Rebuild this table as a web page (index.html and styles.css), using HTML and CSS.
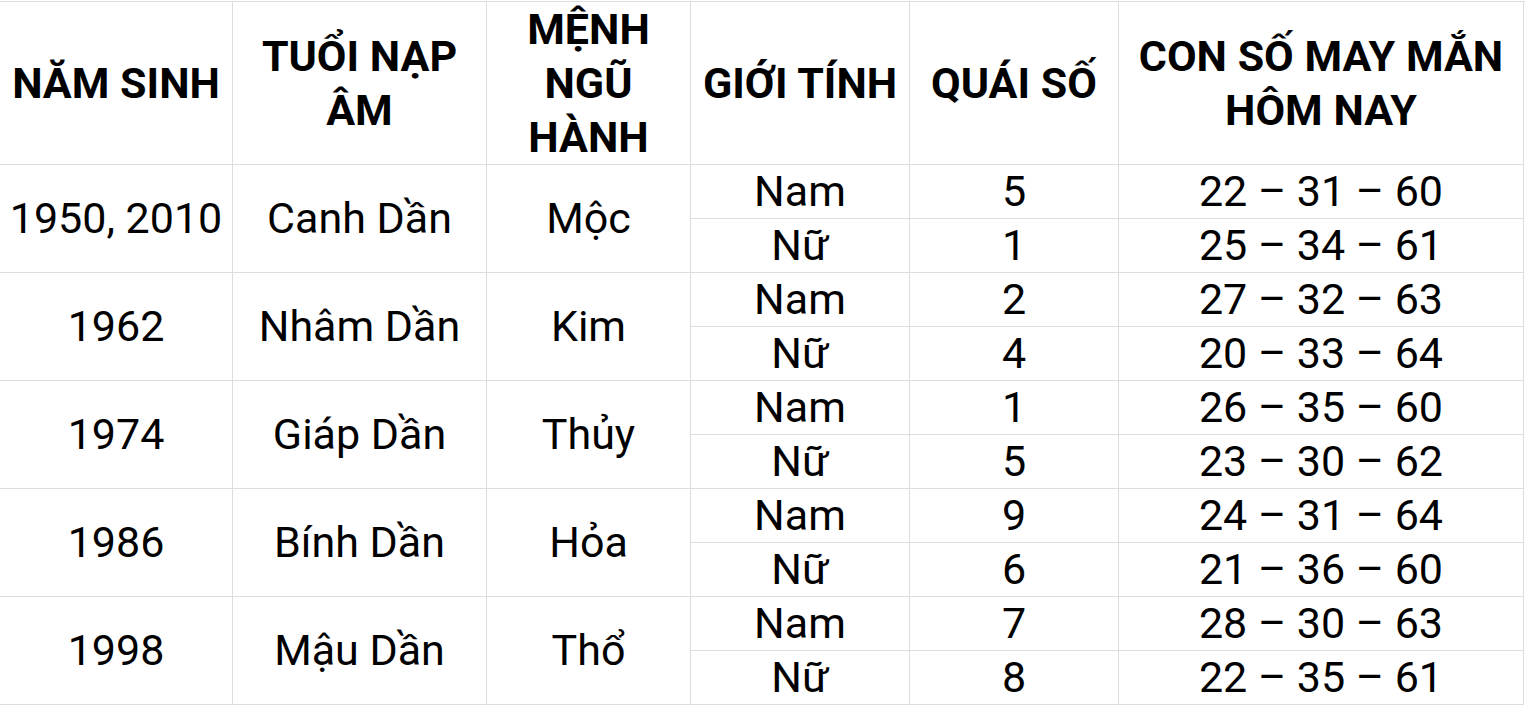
FILE: index.html
```html
<!DOCTYPE html>
<html lang="vi">
<head>
<meta charset="utf-8">
<title>Con số may mắn</title>
<link rel="stylesheet" href="styles.css">
</head>
<body>
<div class="table">
  <div class="th c1">NĂM SINH</div>
  <div class="th">TUỔI NẠP<br>ÂM</div>
  <div class="th">MỆNH<br>NGŨ<br>HÀNH</div>
  <div class="th">GIỚI TÍNH</div>
  <div class="th">QUÁI SỐ</div>
  <div class="th">CON SỐ MAY MẮN<br>HÔM NAY</div>

  <div class="td span c1">1950, 2010</div>
  <div class="td span">Canh Dần</div>
  <div class="td span">Mộc</div>
  <div class="td">Nam</div><div class="td">5</div><div class="td">22 – 31 – 60</div>
  <div class="td">Nữ</div><div class="td">1</div><div class="td">25 – 34 – 61</div>

  <div class="td span c1">1962</div>
  <div class="td span">Nhâm Dần</div>
  <div class="td span">Kim</div>
  <div class="td">Nam</div><div class="td">2</div><div class="td">27 – 32 – 63</div>
  <div class="td">Nữ</div><div class="td">4</div><div class="td">20 – 33 – 64</div>

  <div class="td span c1">1974</div>
  <div class="td span">Giáp Dần</div>
  <div class="td span">Thủy</div>
  <div class="td">Nam</div><div class="td">1</div><div class="td">26 – 35 – 60</div>
  <div class="td">Nữ</div><div class="td">5</div><div class="td">23 – 30 – 62</div>

  <div class="td span c1">1986</div>
  <div class="td span">Bính Dần</div>
  <div class="td span">Hỏa</div>
  <div class="td">Nam</div><div class="td">9</div><div class="td">24 – 31 – 64</div>
  <div class="td">Nữ</div><div class="td">6</div><div class="td">21 – 36 – 60</div>

  <div class="td span c1">1998</div>
  <div class="td span">Mậu Dần</div>
  <div class="td span">Thổ</div>
  <div class="td">Nam</div><div class="td">7</div><div class="td">28 – 30 – 63</div>
  <div class="td">Nữ</div><div class="td">8</div><div class="td">22 – 35 – 61</div>
</div>
</body>
</html>
```

FILE: styles.css
```css
html, body {
  margin: 0;
  padding: 0;
  background: #fff;
}

body {
  font-family: Roboto, "Noto Sans", sans-serif;
  color: #000;
}

.table {
  margin-top: 1px;
  border-top: 1px solid #dddddd;
  display: grid;
  grid-template-columns: 233px 254px 204px 219px 209px 405px;
  grid-template-rows: 163px;
  grid-auto-rows: 54px;
}

.th,
.td {
  display: flex;
  align-items: center;
  justify-content: center;
  text-align: center;
  border-right: 1px solid #dddddd;
  border-bottom: 1px solid #dddddd;
  font-size: 43px;
}

.th {
  font-weight: 700;
  line-height: 54px;
}

.td {
  font-weight: 400;
  line-height: 53px;
}

.span {
  grid-row: span 2;
}
```
